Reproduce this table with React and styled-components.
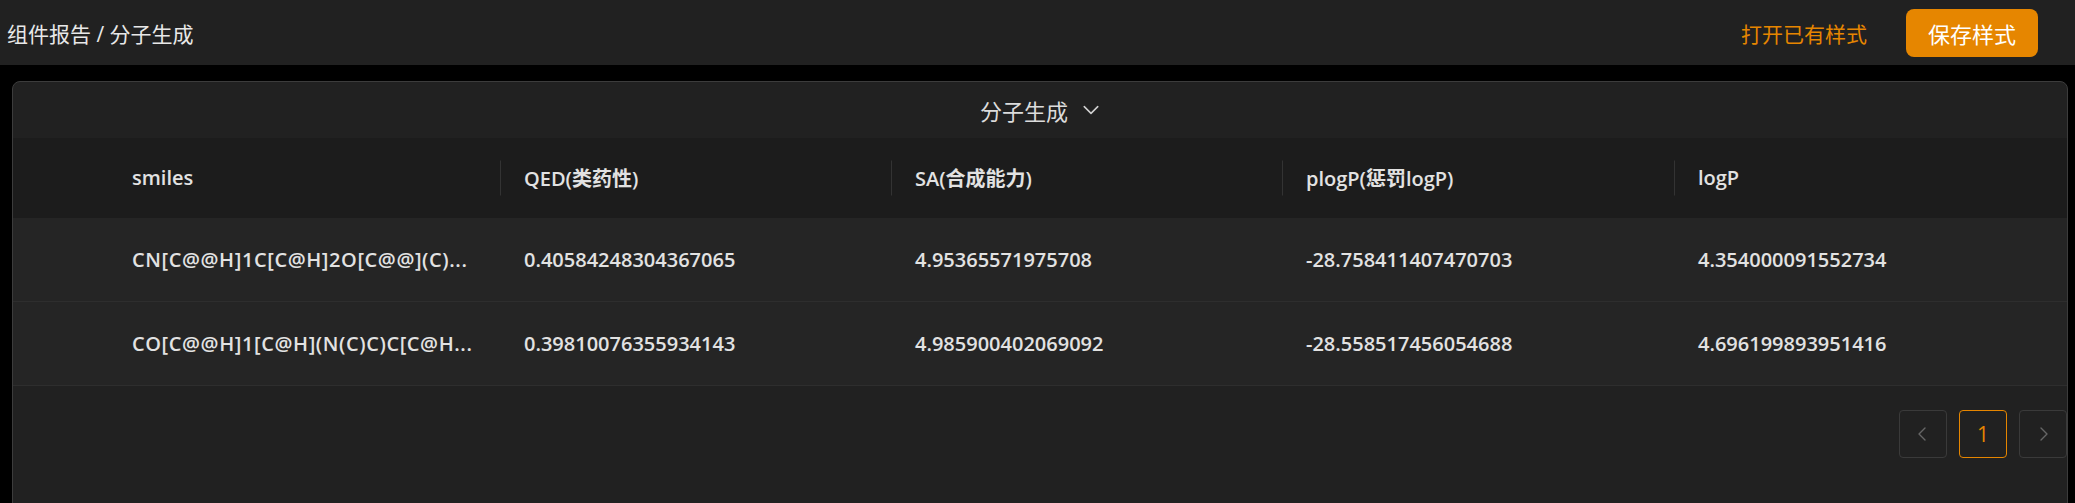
import styled, { createGlobalStyle } from "styled-components";

const GlobalStyle = createGlobalStyle`
    html, body {
        margin: 0;
        padding: 0;
        background: #000;
        overflow: hidden;
    }
    body {
        font-family: "Open Sans", "Noto Sans CJK SC", sans-serif;
        color: #e6e6e6;
    }
`

const Topbar = styled.div`
    height: 65px;
    background: #212121;
    display: flex;
    align-items: center;
    justify-content: space-between;
    padding: 0 37px 0 7px;
`

const Crumb = styled.div`
    font-size: 21px;
    color: #e8e8e8;
`

const Actions = styled.div`
    display: flex;
    align-items: center;
    gap: 39px;
`

const LinkButton = styled.span`
    font-size: 21px;
    color: #e68600;
    cursor: pointer;
`

const SaveButton = styled.button`
    width: 132px;
    height: 48px;
    border: none;
    border-radius: 8px;
    background: #e68600;
    color: #fff;
    font-family: inherit;
    font-size: 22px;
    cursor: pointer;
`

const Main = styled.div`
    padding: 16px 7px 0 12px;
`

const Card = styled.div`
    height: 460px;
    background: #212121;
    border: 1px solid #3c3c3c;
    border-radius: 8px;
    overflow: hidden;
`

const CardTitle = styled.div`
    height: 56px;
    display: flex;
    align-items: center;
    justify-content: center;
    gap: 14px;
    font-size: 22px;
    color: #dcdcdc;
`

const Row = styled.div`
    display: grid;
    grid-template-columns: 95px 392px 391px 391px 392px 1fr;
    height: ${(p) => (p.$head ? "79px" : "83px")};
    background: ${(p) => (p.$head ? "#1c1c1c" : "#252525")};
    border-bottom: 1px solid ${(p) => (p.$head ? "#1c1c1c" : "#2e2e2e")};
`

const Cell = styled.div`
    position: relative;
    display: flex;
    align-items: center;
    padding: 0 24px;
    font-size: 20px;
    font-weight: 600;
    letter-spacing: ${(p) => (p.$wide ? "0.6px" : "0")};
    color: #e2e2e2;
    white-space: nowrap;

    ${(p) =>
        p.$sep &&
        `&::before {
            content: "";
            position: absolute;
            left: 0;
            top: 50%;
            width: 1px;
            height: 35px;
            transform: translateY(-50%);
            background: #333;
        }`}
`

const Pager = styled.div`
    display: flex;
    justify-content: flex-end;
    gap: 12px;
    padding-top: 24px;
`

const PageItem = styled.div`
    width: 48px;
    height: 48px;
    box-sizing: border-box;
    border: 1px solid ${(p) => (p.$active ? "#e68600" : "#3a3a3a")};
    border-radius: 4px;
    display: flex;
    align-items: center;
    justify-content: center;
    color: ${(p) => (p.$active ? "#e68600" : "#666")};
    font-size: 21px;
`

const Chevron = ({ dir, size = 16, color = "currentColor" }) => {
    const pts = {
        down: "2,5 8,11 14,5",
        left: "10,2 4,8 10,14",
        right: "6,2 12,8 6,14",
    }[dir];
    return (
        <svg width={size} height={size} viewBox="0 0 16 16" fill="none">
            <polyline points={pts} stroke={color} strokeWidth="1.4" strokeLinecap="round" strokeLinejoin="round" />
        </svg>
    );
};

const columns = ["smiles", "QED(类药性)", "SA(合成能力)", "plogP(惩罚logP)", "logP"];

const rows = [
    ["CN[C@@H]1C[C@H]2O[C@@](C)...", "0.40584248304367065", "4.95365571975708", "-28.758411407470703", "4.354000091552734"],
    ["CO[C@@H]1[C@H](N(C)C)C[C@H...", "0.39810076355934143", "4.985900402069092", "-28.558517456054688", "4.696199893951416"],
];

const App = () => {
    return (
        <>
            <GlobalStyle />
            <Topbar>
                <Crumb>组件报告 / 分子生成</Crumb>
                <Actions>
                    <LinkButton>打开已有样式</LinkButton>
                    <SaveButton>保存样式</SaveButton>
                </Actions>
            </Topbar>
            <Main>
                <Card>
                    <CardTitle>
                        分子生成
                        <Chevron dir="down" size={18} color="#cfcfcf" />
                    </CardTitle>
                    <Row $head>
                        <Cell />
                        {columns.map((c, i) => (
                            <Cell key={c} $sep={i > 0}>{c}</Cell>
                        ))}
                    </Row>
                    {rows.map((r) => (
                        <Row key={r[0]}>
                            <Cell />
                            {r.map((v, i) => (
                                <Cell key={v} $wide={i === 0}>{v}</Cell>
                            ))}
                        </Row>
                    ))}
                    <Pager>
                        <PageItem><Chevron dir="left" /></PageItem>
                        <PageItem $active>1</PageItem>
                        <PageItem><Chevron dir="right" /></PageItem>
                    </Pager>
                </Card>
            </Main>
        </>
    );
};

export default App;
